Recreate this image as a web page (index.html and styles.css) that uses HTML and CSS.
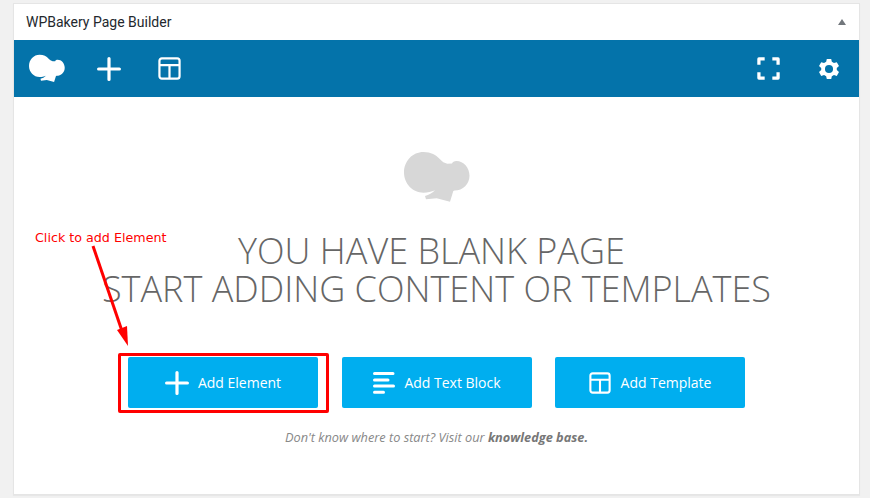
FILE: index.html
```html
<!DOCTYPE html>
<html lang="en">
<head>
<meta charset="utf-8">
<title>WPBakery Page Builder</title>
<link rel="stylesheet" href="styles.css">
</head>
<body>
<svg class="defs" width="0" height="0" aria-hidden="true">
  <symbol id="hat" viewBox="0 0 66 52">
    <path fill="currentColor" d="M19.5 1C27 1 32 4 36 8.3C38 10.5 40.5 12.3 43.3 12.7L48 12.6C48.5 11 50 10 52.5 10C59.5 10 65.5 16.5 65.5 24.7C65.5 33 59 39.5 50.5 39.5L49.3 40L46 50.7L32.7 47.3L22 48.3L21 45C25 44 28 42 31 39.3C27.5 41 23.5 41.7 19.5 41.7C8.5 41.7 0 32.5 0 21.5C0 10 8.5 1 19.5 1Z"/>
  </symbol>
  <symbol id="plus" viewBox="0 0 24 24">
    <path fill="none" stroke="currentColor" stroke-width="3.2" stroke-linecap="round" d="M12 1.6V22.4M1.6 12H22.4"/>
  </symbol>
  <symbol id="tpl" viewBox="0 0 24 24">
    <path fill="none" stroke="currentColor" stroke-width="2.3" d="M4 1.5H20A2.5 2.5 0 0 1 22.5 4V20A2.5 2.5 0 0 1 20 22.5H4A2.5 2.5 0 0 1 1.5 20V4A2.5 2.5 0 0 1 4 1.5ZM1.5 8.5H22.5M12 8.5V22.5"/>
  </symbol>
</svg>
<main class="panel">
  <header class="panel-head">
    <h2 class="panel-title">WPBakery Page Builder</h2>
    <span class="collapse"></span>
  </header>
  <nav class="toolbar">
    <div class="tool-group">
      <svg class="tb-hat"><use href="#hat"/></svg>
      <svg class="tb-plus"><use href="#plus"/></svg>
      <svg class="tb-tpl"><use href="#tpl"/></svg>
    </div>
    <div class="tool-group right">
      <svg class="tb-full" viewBox="0 0 24 24"><path fill="none" stroke="currentColor" stroke-width="3.4" stroke-linejoin="round" d="M2 8V2H8M16 2H22V8M22 16V22H16M8 22H2V16"/></svg>
      <svg class="tb-gear" viewBox="0 0 24 24"><path fill="currentColor" fill-rule="evenodd" d="M9.6 1H14.4L15.1 4.2L17.4 5.5L20.5 4.5L22.9 8.6L20.5 10.8V13.2L22.9 15.4L20.5 19.5L17.4 18.5L15.1 19.8L14.4 23H9.6L8.9 19.8L6.6 18.5L3.5 19.5L1.1 15.4L3.5 13.2V10.8L1.1 8.6L3.5 4.5L6.6 5.5L8.9 4.2ZM12 7.6A4.4 4.4 0 1 0 12 16.4A4.4 4.4 0 1 0 12 7.6Z"/></svg>
    </div>
  </nav>
  <section class="blank">
    <svg class="blank-hat"><use href="#hat"/></svg>
    <h1 class="blank-title"><span class="first-line">YOU HAVE BLANK PAGE</span><br>START ADDING CONTENT OR TEMPLATES</h1>
    <div class="actions">
      <a class="btn highlighted">
        <svg class="btn-plus"><use href="#plus"/></svg>
        <span>Add Element</span>
      </a>
      <a class="btn">
        <svg class="btn-text" viewBox="0 0 22 22"><path fill="none" stroke="currentColor" stroke-width="3" stroke-linecap="round" d="M1.5 1.6H20M1.5 8.1H15M1.5 14.1H20.5M1.5 20.2H10.5"/></svg>
        <span>Add Text Block</span>
      </a>
      <a class="btn">
        <svg class="btn-tpl"><use href="#tpl"/></svg>
        <span>Add Template</span>
      </a>
    </div>
    <p class="hint">Don't know where to start? Visit our <b>knowledge base.</b></p>
  </section>
  <p class="note">Click to add Element</p>
  <svg class="arrow" viewBox="0 0 50 110"><path fill="none" stroke="#f00" stroke-width="3" d="M3 3L32 88"/><path fill="#f00" d="M27 87L37 83L38 103Z"/></svg>
</main>
</body>
</html>
```

FILE: styles.css
```css
* { box-sizing: border-box; }
html, body { margin: 0; height: 498px; overflow: hidden; }
body {
  background: #f1f1f1;
  padding: 3px 10px 3px 13px;
  font-family: "Open Sans", sans-serif;
}
.defs { position: absolute; }
svg { display: block; color: #fff; }
.panel {
  position: relative;
  height: 492px;
  background: #fff;
  border: 1px solid #e5e5e5;
  box-shadow: 0 1px 1px rgba(0,0,0,.04);
}
.panel-head {
  height: 36px;
  display: flex;
  align-items: center;
  justify-content: space-between;
  padding: 0 13px 0 12px;
}
.panel-title {
  margin: 0;
  font-family: Roboto, sans-serif;
  font-size: 14px;
  font-weight: 400;
  color: #23282d;
}
.collapse {
  width: 0;
  height: 0;
  border-left: 4px solid transparent;
  border-right: 4px solid transparent;
  border-bottom: 6px solid #72777c;
}
.toolbar {
  height: 57px;
  background: #0473aa;
  display: flex;
  align-items: center;
  justify-content: space-between;
  padding: 0 19px 0 15px;
}
.tool-group { display: flex; align-items: center; }
.tb-hat { width: 36px; height: 29px; }
.tb-plus { width: 24px; height: 24px; margin-left: 32px; }
.tb-tpl { width: 23px; height: 23px; margin-left: 37px; }
.tb-full { width: 23px; height: 23px; }
.tb-gear { width: 22px; height: 22px; margin-left: 38px; }
.blank {
  height: 397px;
  display: flex;
  flex-direction: column;
  align-items: center;
  padding-top: 54px;
}
.blank-hat { width: 66px; height: 52px; color: #d7d7d7; }
.blank-title {
  margin: 29px 0 0;
  font-size: 36px;
  line-height: 38px;
  font-weight: 300;
  color: #666;
  text-align: center;
  white-space: nowrap;
}
.first-line { padding-right: 10px; }
.actions { display: flex; gap: 23.5px; margin-top: 49px; }
.btn {
  position: relative;
  width: 190px;
  height: 51px;
  background: #00aeef;
  border-radius: 2px;
  color: #fff;
  font-size: 14px;
  display: flex;
  align-items: center;
  justify-content: center;
  gap: 10px;
}
.highlighted { gap: 9px; }
.highlighted::after {
  content: "";
  position: absolute;
  left: -10px; right: -11px; top: -4px; bottom: -5px;
  border: 3px solid #f00;
  border-radius: 2px;
}
.btn-plus { width: 24px; height: 24px; }
.btn-text { width: 22px; height: 22px; margin-left: 1px; margin-right: -1px; }
.btn-tpl { width: 22px; height: 22px; }
.hint {
  margin: 21px 0 0;
  font-size: 12.75px;
  line-height: 17px;
  font-style: italic;
  color: #888;
}
.hint b { color: #777; font-weight: 700; }
.note {
  position: absolute;
  left: 21px;
  top: 225px;
  margin: 0;
  font-size: 12.7px;
  line-height: 18px;
  color: #f00;
  font-family: "DejaVu Sans", sans-serif;
}
.arrow {
  position: absolute;
  left: 76px;
  top: 239px;
  width: 50px;
  height: 110px;
}
```
